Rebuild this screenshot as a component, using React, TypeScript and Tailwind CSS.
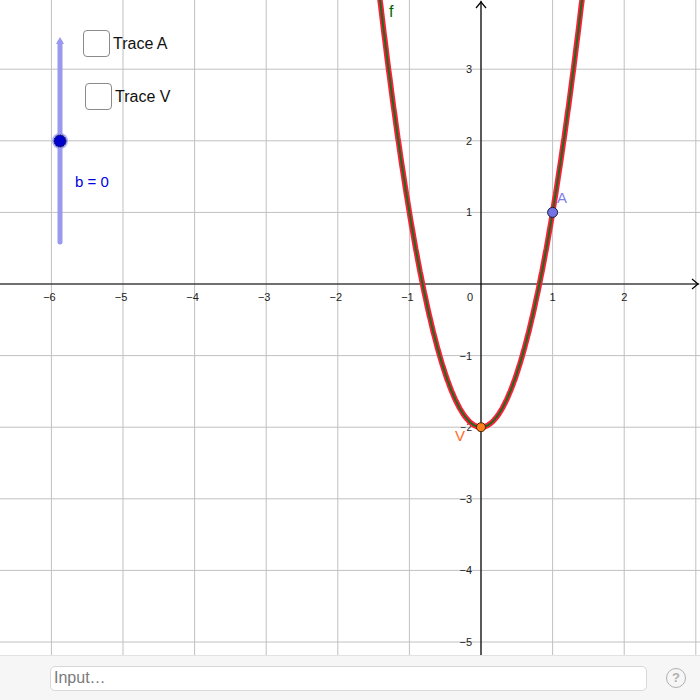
import React from "react";

const OX = 481;
const OY = 284;
const U = 71.6;
const W = 700;
const H = 655;

const px = (x: number) => OX + x * U;
const py = (y: number) => OY - y * U;

function curvePoints() {
  const pts: string[] = [];
  for (let x = -1.5; x <= 1.5; x += 0.01) {
    const y = 3 * x * x - 2;
    pts.push(`${px(x).toFixed(1)},${py(y).toFixed(1)}`);
  }
  return pts.join(" ");
}

function Graph() {
  const xs = [-6, -5, -4, -3, -2, -1, 0, 1, 2, 3];
  const ys = [3, 2, 1, 0, -1, -2, -3, -4, -5];
  const pts = curvePoints();
  const font = "'Liberation Sans', Arial, sans-serif";

  return (
    <svg width={W} height={H} className="absolute inset-0">
      {/* grid */}
      {xs.map((k) => (
        <line key={"gx" + k} x1={px(k)} y1={0} x2={px(k)} y2={H} stroke="#c0c0c0" strokeWidth={1} />
      ))}
      {ys.map((k) => (
        <line key={"gy" + k} x1={0} y1={py(k)} x2={W} y2={py(k)} stroke="#c0c0c0" strokeWidth={1} />
      ))}

      {/* axes */}
      <line x1={0} y1={OY} x2={W - 1} y2={OY} stroke="#000" strokeWidth={1.2} />
      <polyline points={`${W - 8},${OY - 5} ${W - 2},${OY} ${W - 8},${OY + 5}`} fill="none" stroke="#000" strokeWidth={1.2} />
      <line x1={OX} y1={1} x2={OX} y2={H} stroke="#000" strokeWidth={1.2} />
      <polyline points={`${OX - 5},${8} ${OX},${2} ${OX + 5},${8}`} fill="none" stroke="#000" strokeWidth={1.2} />

      {/* tick labels */}
      <g fontFamily={font} fontSize={11} fill="#222">
        {xs
          .filter((k) => k !== 0 && k !== 3)
          .map((k) => (
            <text key={"lx" + k} x={px(k) + (k < 0 ? -2 : 0)} y={OY + 17} textAnchor="middle">
              {k < 0 ? `\u2212${-k}` : k}
            </text>
          ))}
        <text x={OX - 8} y={OY + 17} textAnchor="end">0</text>
        {ys
          .filter((k) => k !== 0 && k !== -2)
          .map((k) => (
            <text key={"ly" + k} x={OX - 9} y={py(k) + 4} textAnchor="end">
              {k < 0 ? `\u2212${-k}` : k}
            </text>
          ))}
        <text x={OX - 9} y={py(-2) + 4} textAnchor="end" fontSize={10}>{"\u22122"}</text>
      </g>

      {/* curve */}
      <polyline points={pts} fill="none" stroke="#ff1f3a" strokeWidth={5.5} strokeLinejoin="round" />
      <polyline points={pts} fill="none" stroke="#1d6b1d" strokeWidth={2} strokeLinejoin="round" />
      <text x={389} y={17} fontFamily={font} fontSize={16} fill="#006400">f</text>

      {/* slider */}
      <line x1={60} y1={42} x2={60} y2={242} stroke="#9999f0" strokeWidth={5} strokeLinecap="round" />
      <polygon points="56,44 60,37 64,44" fill="#9999f0" />
      <circle cx={60} cy={141} r={8} fill="#9999ff" opacity={0.8} />
      <circle cx={60} cy={141} r={6} fill="#0000cc" stroke="#111" strokeWidth={1} strokeDasharray="1.5 1" />

      {/* points */}
      <circle cx={px(1)} cy={py(1)} r={5} fill="#7373e6" stroke="#1a1a40" strokeWidth={1} />
      <text x={557} y={203} fontFamily={font} fontSize={15} fill="#7f7fe8">A</text>
      <circle cx={px(0)} cy={py(-2)} r={4.5} fill="#ff7f1a" stroke="#402000" strokeWidth={1} />
      <text x={455} y={441} fontFamily={font} fontSize={15} fill="#ff6a1a">V</text>
    </svg>
  );
}

function TraceBox({ label }: { label: string }) {
  return (
    <div className="flex items-center gap-[3px]">
      <div className="w-[27px] h-[27px] rounded-[4px] border border-[#8a8a8a] bg-white" />
      <span className="text-[16px] text-[#111]">{label}</span>
    </div>
  );
}

export default function App() {
  return (
    <div
      className="w-[700px] h-[700px] flex flex-col bg-white overflow-hidden"
      style={{ fontFamily: "'Liberation Sans', Arial, sans-serif" }}
    >
      <div className="relative w-[700px] h-[655px] shrink-0">
        <Graph />
        <div className="absolute left-[83px] top-[30px]">
          <TraceBox label="Trace A" />
        </div>
        <div className="absolute left-[85px] top-[83px]">
          <TraceBox label="Trace V" />
        </div>
        <div className="absolute left-[75px] top-[171px] text-[15px] text-[#0000dd]">b = 0</div>
      </div>
      <div className="flex-1 flex items-center gap-[19px] bg-[#f6f6f6] border-t border-[#e2e2e2] pl-[50px] pr-[14px]">
        <div className="w-[598px] h-[25px] bg-white border border-[#d8d8d8] rounded-[5px] flex items-center px-[3px]">
          <span className="text-[16px] text-[#7a7a7a]">Input…</span>
        </div>
        <div className="w-[20px] h-[20px] rounded-full border-[1.5px] border-[#b0b0b0] flex items-center justify-center text-[13px] font-bold text-[#b0b0b0]">
          ?
        </div>
      </div>
    </div>
  );
}
